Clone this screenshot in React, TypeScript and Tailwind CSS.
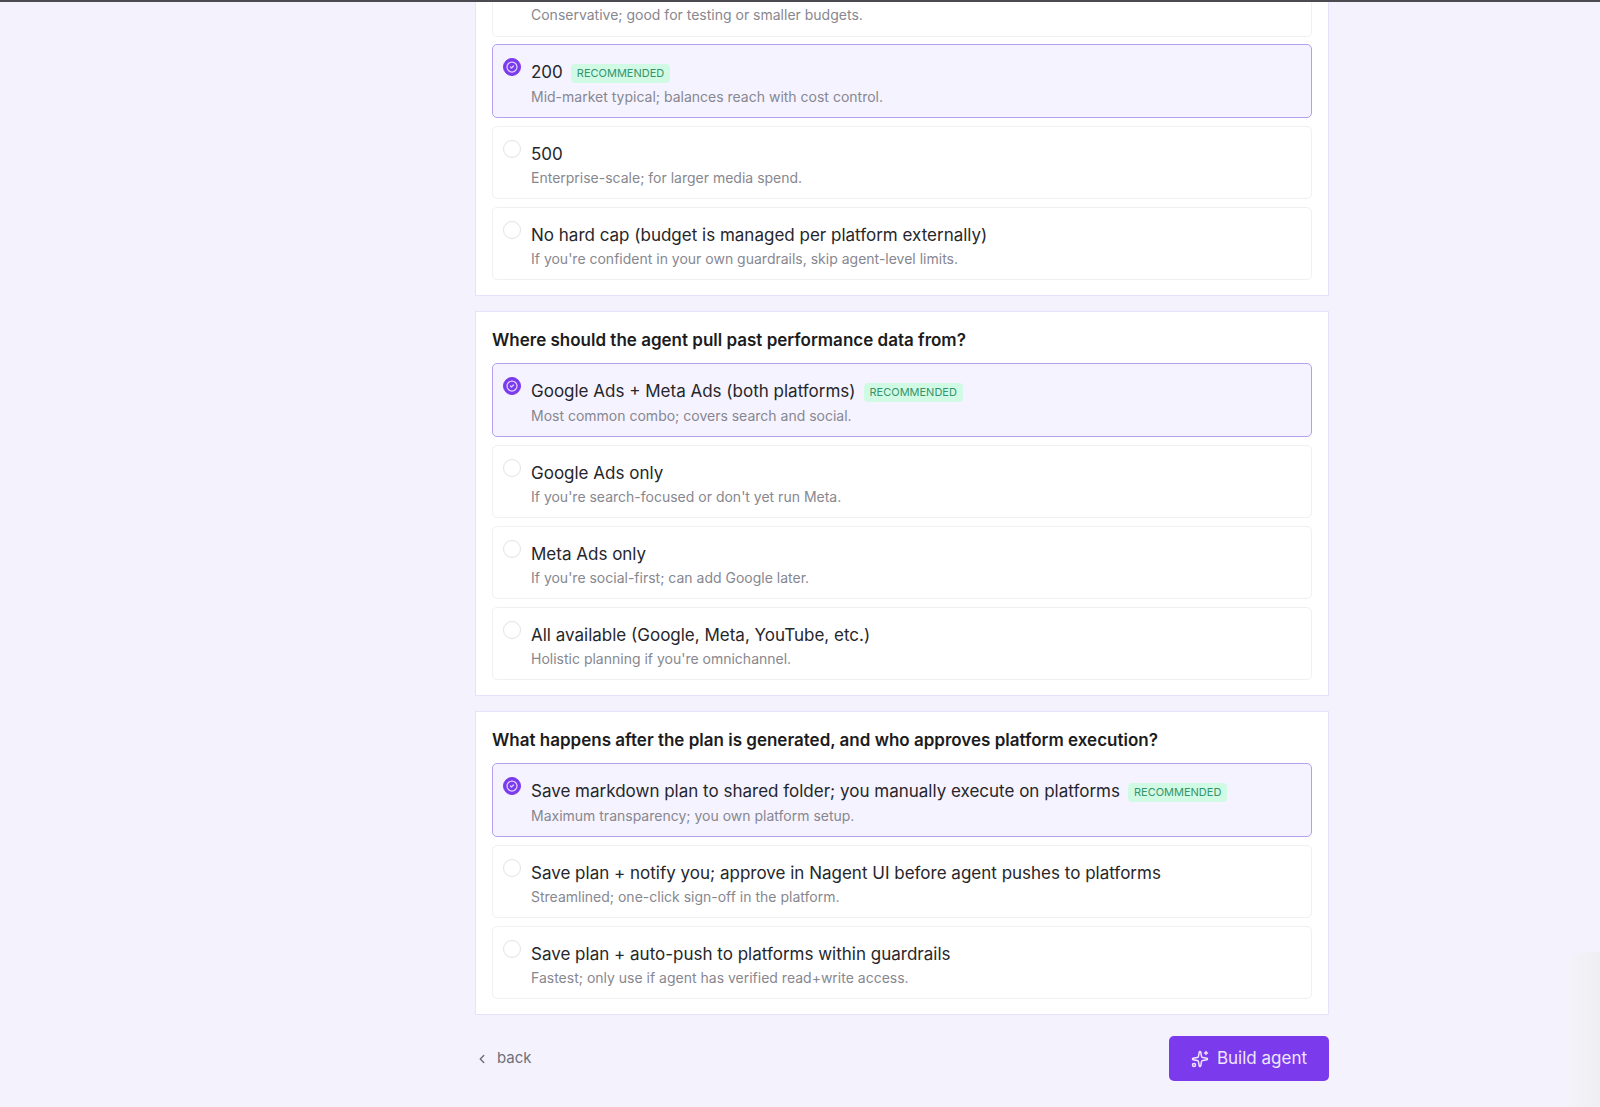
import { useState } from "react";
import { ChevronLeft, CircleCheck, Sparkles } from "lucide-react";

type Option = {
  label: string;
  hint: string;
  recommended?: boolean;
};

type Question = {
  id: string;
  title: string;
  options: Option[];
};

const budgetOptions: Option[] = [
  {
    label: "200",
    hint: "Mid-market typical; balances reach with cost control.",
    recommended: true,
  },
  { label: "500", hint: "Enterprise-scale; for larger media spend." },
  {
    label: "No hard cap (budget is managed per platform externally)",
    hint: "If you're confident in your own guardrails, skip agent-level limits.",
  },
];

const questions: Question[] = [
  {
    id: "source",
    title: "Where should the agent pull past performance data from?",
    options: [
      {
        label: "Google Ads + Meta Ads (both platforms)",
        hint: "Most common combo; covers search and social.",
        recommended: true,
      },
      {
        label: "Google Ads only",
        hint: "If you're search-focused or don't yet run Meta.",
      },
      {
        label: "Meta Ads only",
        hint: "If you're social-first; can add Google later.",
      },
      {
        label: "All available (Google, Meta, YouTube, etc.)",
        hint: "Holistic planning if you're omnichannel.",
      },
    ],
  },
  {
    id: "approval",
    title:
      "What happens after the plan is generated, and who approves platform execution?",
    options: [
      {
        label: "Save markdown plan to shared folder; you manually execute on platforms",
        hint: "Maximum transparency; you own platform setup.",
        recommended: true,
      },
      {
        label: "Save plan + notify you; approve in Nagent UI before agent pushes to platforms",
        hint: "Streamlined; one-click sign-off in the platform.",
      },
      {
        label: "Save plan + auto-push to platforms within guardrails",
        hint: "Fastest; only use if agent has verified read+write access.",
      },
    ],
  },
];

const OptionList = ({ name, options }: { name: string; options: Option[] }) => {
  const [selected, setSelected] = useState(0);

  return (
    <div className="flex flex-col gap-2">
      {options.map((option, i) => (
        <label
          key={option.label}
          className="flex cursor-pointer items-start gap-2.5 rounded-[5px] border border-[#f0f0f2] px-2.5 pt-3 pb-2.5 has-checked:border-[#b3a0f0] has-checked:bg-[#f5f3ff]"
        >
          <span className="mt-px grid shrink-0 place-items-center">
            <input
              type="radio"
              name={name}
              checked={selected === i}
              onChange={() => setSelected(i)}
              className="peer col-start-1 row-start-1 size-[18px] appearance-none rounded-full border border-[#e3e3e7] bg-white checked:border-[#7c3aed] checked:bg-[#7c3aed]"
            />
            <CircleCheck
              className="pointer-events-none col-start-1 row-start-1 hidden size-3 text-[#ddd0fd] peer-checked:block"
              strokeWidth={2.5}
            />
          </span>
          <span className="flex min-w-0 flex-col pt-0.5">
            <span className="flex items-start gap-2">
              <span className="text-[17px] leading-[27px] text-[#26262b]">
                {option.label}
              </span>
              {option.recommended && (
                <span className="mt-[5px] mb-1 rounded bg-[#d1fae5] px-1.5 text-[11px] leading-[19px] text-[#35946b]">
                  RECOMMENDED
                </span>
              )}
            </span>
            <span className="text-sm leading-5 text-[#87878f]">
              {option.hint}
            </span>
          </span>
        </label>
      ))}
    </div>
  );
};

export default function App() {
  return (
    <div className="min-h-screen border-t-2 border-[#4a4a50] bg-[#f4f3fd] pl-[204px] font-[Inter,sans-serif]">
      <main className="mx-auto max-w-[854px]">
        <form className="flex flex-col gap-[15px]" onSubmit={(e) => e.preventDefault()}>
          <section className="border border-t-0 border-[#e6e2fb] bg-white px-4 pb-[15px]">
            <p className="mb-[7px] rounded-b-[5px] border border-t-0 border-[#f0f0f2] pt-[3px] pb-[11px] pl-[38px] text-sm leading-5 text-[#87878f]">
              Conservative; good for testing or smaller budgets.
            </p>
            <OptionList name="budget" options={budgetOptions} />
          </section>

          {questions.map((question) => (
            <section
              key={question.id}
              className="border border-[#e6e2fb] bg-white px-4 pb-[15px]"
            >
              <h2 className="pt-3.5 pb-[9px] text-[17px] leading-7 font-semibold text-[#1c1c20]">
                {question.title}
              </h2>
              <OptionList name={question.id} options={question.options} />
            </section>
          ))}

          <footer className="flex items-center justify-between pt-1.5 pb-6">
            <button
              type="button"
              className="flex cursor-pointer items-center gap-2 text-[15px] text-[#6f6f7a]"
            >
              <ChevronLeft className="size-3.5" strokeWidth={2.5} />
              back
            </button>
            <button
              type="submit"
              className="flex h-[45px] cursor-pointer items-center gap-2 rounded-[5px] bg-[#7c3aed] px-[22px] text-[17px] text-[#eee6fe]"
            >
              <Sparkles className="size-[18px]" strokeWidth={2} />
              Build agent
            </button>
          </footer>
        </form>
      </main>
      {/* edge of the help widget's shadow */}
      <div className="pointer-events-none fixed right-0 bottom-0 h-[155px] w-8 rounded-tl-2xl bg-linear-to-r from-[#f3f3f9] to-[#eeeef3]" />
    </div>
  );
}
